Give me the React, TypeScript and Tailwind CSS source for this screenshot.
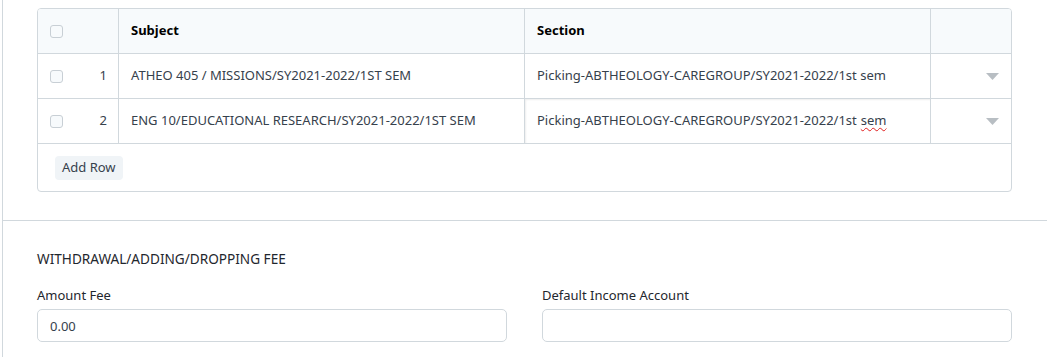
import { useState } from 'react';

const rows = [
  {
    idx: 1,
    subject: 'ATHEO 405 / MISSIONS/SY2021-2022/1ST SEM',
    section: 'Picking-ABTHEOLOGY-CAREGROUP/SY2021-2022/1st sem',
    editing: false,
  },
  {
    idx: 2,
    subject: 'ENG 10/EDUCATIONAL RESEARCH/SY2021-2022/1ST SEM',
    section: 'Picking-ABTHEOLOGY-CAREGROUP/SY2021-2022/1st',
    editing: true,
  },
];

function Check() {
  return <span className="block h-[13px] w-[13px] rounded-[3px] border border-[#c8cfd5] bg-[#f7fafc]" />;
}

function Caret() {
  return (
    <svg width="13" height="7" viewBox="0 0 13 7" className="text-[#b8bec3]">
      <path d="M0 0h13L6.5 7z" fill="currentColor" />
    </svg>
  );
}

export default function App() {
  const [fee, setFee] = useState('0.00');

  return (
    <div className="h-[357px] w-[1047px] overflow-hidden bg-white font-['Noto_Sans',sans-serif] text-[13px] text-[#36414c]">
      <div className="ml-[2px] h-full border-l border-[#d1d8dd]">
        <div className="pb-7 pl-[34px] pr-[35px] pt-2">
          <div className="overflow-hidden rounded-[4px] border border-[#d1d8dd]">
            <div className="grid h-[45px] grid-cols-[81px_406px_406px_1fr] border-b border-[#d1d8dd] bg-[#f7fafc] font-bold text-black">
              <div className="flex items-center border-r border-[#d1d8dd] pl-3">
                <Check />
              </div>
              <div className="flex items-center border-r border-[#d1d8dd] pl-3">Subject</div>
              <div className="flex items-center border-r border-[#d1d8dd] pl-3">Section</div>
              <div />
            </div>
            {rows.map((r) => (
              <div
                key={r.idx}
                className="grid h-[45px] grid-cols-[81px_406px_406px_1fr] border-b border-[#d1d8dd]"
              >
                <div className="flex items-center justify-between border-r border-[#d1d8dd] pl-3 pr-[11px]">
                  <Check />
                  <span>{r.idx}</span>
                </div>
                <div className="flex items-center border-r border-[#d1d8dd] pl-3">{r.subject}</div>
                <div
                  className={
                    r.editing
                      ? 'flex items-center border-r border-[#d1d8dd] pl-3 shadow-[inset_1px_1px_2px_rgba(0,0,0,0.07)]'
                      : 'flex items-center border-r border-[#d1d8dd] pl-3'
                  }
                >
                  {r.section}
                  {r.editing ? (
                    <span className="ml-1 underline decoration-[#e02020] decoration-wavy decoration-1 underline-offset-2">sem</span>
                  ) : null}
                </div>
                <div className="flex items-center justify-end pr-3">
                  <Caret />
                </div>
              </div>
            ))}
            <div className="flex h-[47px] items-center pl-[17px]">
              <button
                type="button"
                className="h-6 rounded-[4px] bg-[#f0f4f7] px-[7px] text-[13px] text-[#36414c]"
              >
                Add Row
              </button>
            </div>
          </div>
        </div>

        <div className="border-t border-[#d1d8dd] pl-[34px] pr-[35px] pt-[28px]">
          <div className="text-[13.6px] leading-5 text-[#1f272e]">WITHDRAWAL/ADDING/DROPPING FEE</div>
          <div className="mt-4 grid grid-cols-2 gap-[35px]">
            <label className="block">
              <span className="block text-[13px] leading-5 text-[#1f272e]">Amount Fee</span>
              <input
                value={fee}
                onChange={(e) => setFee(e.target.value)}
                className="mt-[4px] h-[33px] w-full rounded-[5px] border border-[#d1d8dd] px-3 text-[13px] text-[#36414c] outline-none"
              />
            </label>
            <label className="block">
              <span className="block text-[13px] leading-5 text-[#1f272e]">Default Income Account</span>
              <input className="mt-[4px] h-[33px] w-full rounded-[5px] border border-[#d1d8dd] px-3 text-[13px] outline-none" />
            </label>
          </div>
        </div>
      </div>
    </div>
  );
}
